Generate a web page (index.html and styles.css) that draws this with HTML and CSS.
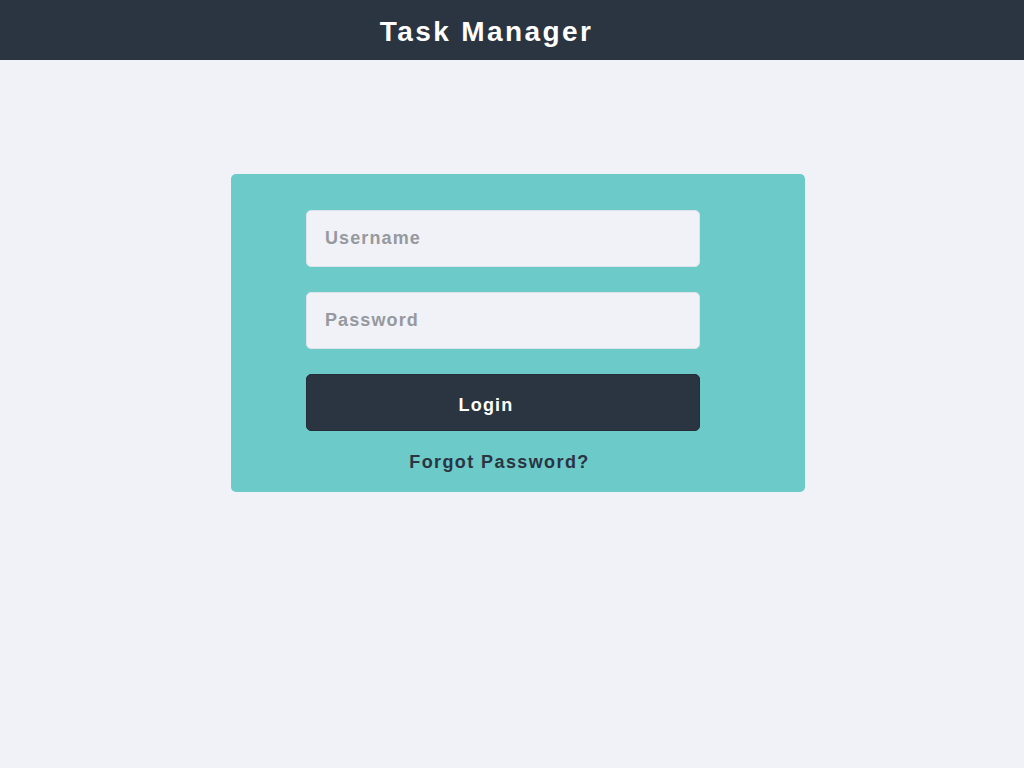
FILE: index.html
```html
<!DOCTYPE html>
<html lang="en">
<head>
<meta charset="utf-8">
<title>Task Manager</title>
<link rel="stylesheet" href="styles.css">
</head>
<body>
<header class="topbar">
  <h1 class="title">Task Manager</h1>
</header>
<main class="page">
  <form class="card">
    <input class="field" type="text" placeholder="Username">
    <input class="field" type="password" placeholder="Password">
    <button class="btn" type="button">Login</button>
    <a class="forgot" href="#">Forgot Password?</a>
  </form>
</main>
</body>
</html>
```
FILE: styles.css
```css
* { box-sizing: border-box; }
html, body {
  margin: 0;
  padding: 0;
  background: #f0f2f7;
  font-family: "Liberation Sans", Arial, sans-serif;
  font-weight: 700;
}
.topbar {
  height: 60px;
  background: #2b3441;
  display: flex;
  align-items: center;
  justify-content: center;
  padding-right: 51px;
}
.title {
  margin: 0;
  color: #ffffff;
  font-size: 28px;
  font-weight: 700;
  letter-spacing: 2.4px;
  line-height: 32px;
  padding-top: 4px;
}
.page {
  padding-top: 114px;
  padding-left: 231px;
}
.card {
  width: 574px;
  background: #6ccac9;
  border-radius: 5px;
  padding: 36px 105px 19px 75px;
  display: flex;
  flex-direction: column;
  margin: 0;
}
.field {
  display: block;
  width: 394px;
  height: 57px;
  margin: 0 0 25px 0;
  padding: 0 18px;
  border: 1px solid #dce3ea;
  border-radius: 5px;
  background: #f0f2f7;
  font-family: "Liberation Sans", Arial, sans-serif;
  font-weight: 700;
  font-size: 18px;
  letter-spacing: 1.1px;
  color: #2b3441;
  outline: none;
}
.field::placeholder {
  color: #96999e;
  opacity: 1;
}
.btn {
  display: block;
  width: 394px;
  height: 57px;
  margin: 0;
  padding: 5px 34px 0 0;
  border: 1px solid #252d38;
  border-radius: 5px;
  background: #2b3441;
  color: #ffffff;
  font-family: "Liberation Sans", Arial, sans-serif;
  font-weight: 700;
  font-size: 18px;
  letter-spacing: 1.2px;
  line-height: 21px;
  text-align: center;
  cursor: pointer;
}
.forgot {
  display: block;
  margin-top: 21px;
  padding-right: 7px;
  text-align: center;
  color: #2b3441;
  text-decoration: none;
  font-size: 18px;
  letter-spacing: 1.4px;
  line-height: 21px;
}
```
